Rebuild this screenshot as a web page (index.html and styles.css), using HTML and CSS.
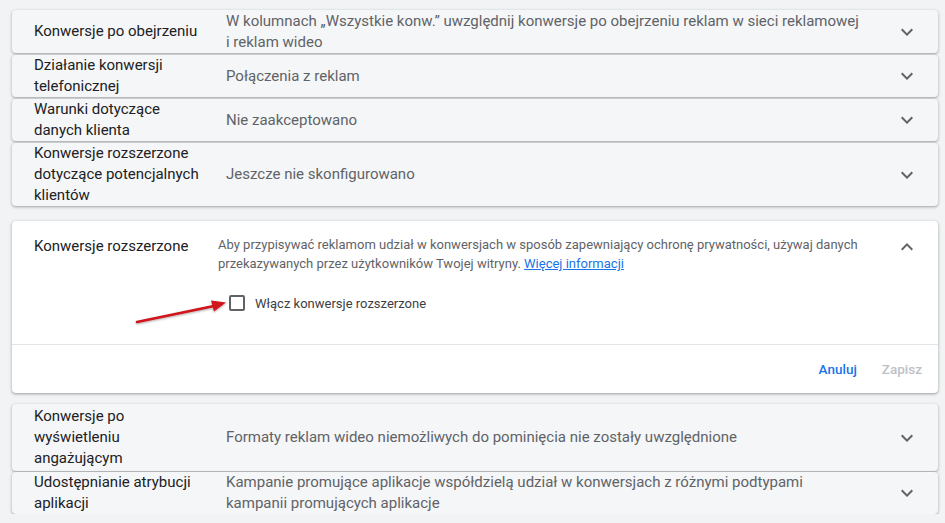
FILE: index.html
```html
<!DOCTYPE html>
<html lang="pl">
<head>
<meta charset="utf-8">
<title>Ustawienia konwersji</title>
<link rel="stylesheet" href="styles.css">
</head>
<body>
<div class="page">
  <div class="group">
    <div class="row">
      <div class="label">Konwersje po obejrzeniu</div>
      <div class="value">W kolumnach „Wszystkie konw.” uwzględnij konwersje po obejrzeniu reklam w sieci reklamowej i reklam wideo</div>
      <div class="chev"><svg viewBox="0 0 24 24" width="24" height="24"><path d="M7.41 8.59 12 13.17l4.59-4.58L18 10l-6 6-6-6z"/></svg></div>
    </div>
    <div class="row">
      <div class="label">Działanie konwersji telefonicznej</div>
      <div class="value">Połączenia z reklam</div>
      <div class="chev"><svg viewBox="0 0 24 24" width="24" height="24"><path d="M7.41 8.59 12 13.17l4.59-4.58L18 10l-6 6-6-6z"/></svg></div>
    </div>
    <div class="row">
      <div class="label">Warunki dotyczące danych klienta</div>
      <div class="value">Nie zaakceptowano</div>
      <div class="chev"><svg viewBox="0 0 24 24" width="24" height="24"><path d="M7.41 8.59 12 13.17l4.59-4.58L18 10l-6 6-6-6z"/></svg></div>
    </div>
    <div class="row">
      <div class="label">Konwersje rozszerzone dotyczące potencjalnych klientów</div>
      <div class="value">Jeszcze nie skonfigurowano</div>
      <div class="chev"><svg viewBox="0 0 24 24" width="24" height="24"><path d="M7.41 8.59 12 13.17l4.59-4.58L18 10l-6 6-6-6z"/></svg></div>
    </div>
  </div>

  <div class="expanded">
    <div class="exp-body">
      <div class="exp-label">Konwersje rozszerzone</div>
      <div class="exp-main">
        <p class="desc">Aby przypisywać reklamom udział w konwersjach w sposób zapewniający ochronę prywatności, używaj danych przekazywanych przez użytkowników Twojej witryny. <a href="#" class="link">Więcej informacji</a></p>
        <label class="option">
          <span class="box-wrap"><span class="box"></span></span>
          <span class="opt-text">Włącz konwersje rozszerzone</span>
        </label>
      </div>
      <div class="chev chev-up"><svg viewBox="0 0 24 24" width="24" height="24"><path d="M7.41 15.41 12 10.83l4.59 4.58L18 14l-6-6-6 6z"/></svg></div>
    </div>
    <div class="exp-footer">
      <button class="btn btn-primary">Anuluj</button>
      <button class="btn btn-disabled">Zapisz</button>
    </div>
    <svg class="arrow" width="110" height="40" viewBox="0 0 110 40">
      <defs>
        <filter id="sh" x="-10%" y="-50%" width="120%" height="200%">
          <feDropShadow dx="0" dy="1" stdDeviation="0.8" flood-color="#000" flood-opacity="0.35"/>
        </filter>
      </defs>
      <g filter="url(#sh)">
        <line x1="5" y1="33" x2="82" y2="17" stroke="#d0121b" stroke-width="2.4" stroke-linecap="round"/>
        <polygon points="94,13.5 79,11.5 82,22.5" fill="#d0121b"/>
      </g>
    </svg>
  </div>

  <div class="group group-tight">
    <div class="row row-tall">
      <div class="label">Konwersje po wyświetleniu angażującym</div>
      <div class="value">Formaty reklam wideo niemożliwych do pominięcia nie zostały uwzględnione</div>
      <div class="chev"><svg viewBox="0 0 24 24" width="24" height="24"><path d="M7.41 8.59 12 13.17l4.59-4.58L18 10l-6 6-6-6z"/></svg></div>
    </div>
    <div class="row">
      <div class="label">Udostępnianie atrybucji aplikacji</div>
      <div class="value">Kampanie promujące aplikacje współdzielą udział w konwersjach z różnymi podtypami kampanii promujących aplikacje</div>
      <div class="chev"><svg viewBox="0 0 24 24" width="24" height="24"><path d="M7.41 8.59 12 13.17l4.59-4.58L18 10l-6 6-6-6z"/></svg></div>
    </div>
  </div>
</div>
</body>
</html>
```

FILE: styles.css
```css
* { box-sizing: border-box; }
html, body {
  margin: 0;
  padding: 0;
  background: #f1f3f4;
  font-family: Roboto, "Liberation Sans", Arial, sans-serif;
  color: #202124;
}
.page {
  padding: 10px 7px 0 12px;
  display: flex;
  flex-direction: column;
}
.group {
  display: flex;
  flex-direction: column;
  gap: 2px;
}
.group-tight { gap: 1px; }
.row {
  display: flex;
  align-items: center;
  background: #f5f6f7;
  border-radius: 4px;
  box-shadow: 0 1px 2px rgba(60,64,67,0.30), 0 1px 3px 1px rgba(60,64,67,0.12);
  padding: 0 19px 0 22px;
  min-height: 42px;
  font-size: 15px;
  line-height: 21px;
}
.row:first-child { min-height: 43px; }
.row-tall { padding-top: 2px; padding-bottom: 2px; }
.label {
  width: 172px;
  flex: none;
  color: #202124;
  margin-right: 20px;
}
.value {
  flex: 1;
  color: #5f6368;
  max-width: 636px;
  margin-right: auto;
}
.chev {
  width: 24px;
  height: 24px;
  flex: none;
  fill: #5f6368;
}
.chev svg { display: block; }

.expanded {
  position: relative;
  margin: 15px 0 11px;
  background: #fff;
  border-radius: 4px;
  box-shadow: 0 1px 2px rgba(60,64,67,0.30), 0 1px 3px 1px rgba(60,64,67,0.15);
}
.exp-body {
  display: flex;
  align-items: flex-start;
  padding: 14px 19px 21px 22px;
  border-bottom: 1px solid #e3e5e8;
}
.exp-label {
  width: 164px;
  flex: none;
  margin-right: 20px;
  margin-top: 1px;
  font-size: 15px;
  line-height: 21px;
  color: #202124;
}
.exp-main {
  flex: 1;
  margin-right: 20px;
}
.desc {
  margin: 0;
  font-size: 13px;
  line-height: 19px;
  color: #5f6368;
}
.link {
  color: #1a73e8;
  text-decoration: underline;
}
.option {
  display: flex;
  align-items: center;
  margin-top: 10px;
  height: 40px;
}
.box-wrap {
  width: 40px;
  height: 40px;
  flex: none;
  display: flex;
  align-items: center;
  padding-left: 11px;
  margin-right: -3px;
}
.box {
  width: 16px;
  height: 16px;
  border: 2px solid #5f6368;
  border-radius: 2px;
}
.opt-text {
  font-size: 13px;
  color: #3c4043;
}
.exp-footer {
  display: flex;
  justify-content: flex-end;
  align-items: center;
  height: 48px;
  padding: 0 8px;
  gap: 9px;
}
.btn {
  background: none;
  border: none;
  font-family: Roboto, "Liberation Sans", Arial, sans-serif;
  font-size: 13.5px;
  font-weight: 500;
  padding: 0 8px;
  height: 36px;
  cursor: pointer;
}
.btn-primary { color: #1a73e8; }
.btn-disabled { color: #bdc1c6; }
.arrow {
  position: absolute;
  left: 120px;
  top: 68px;
  overflow: visible;
}
```
